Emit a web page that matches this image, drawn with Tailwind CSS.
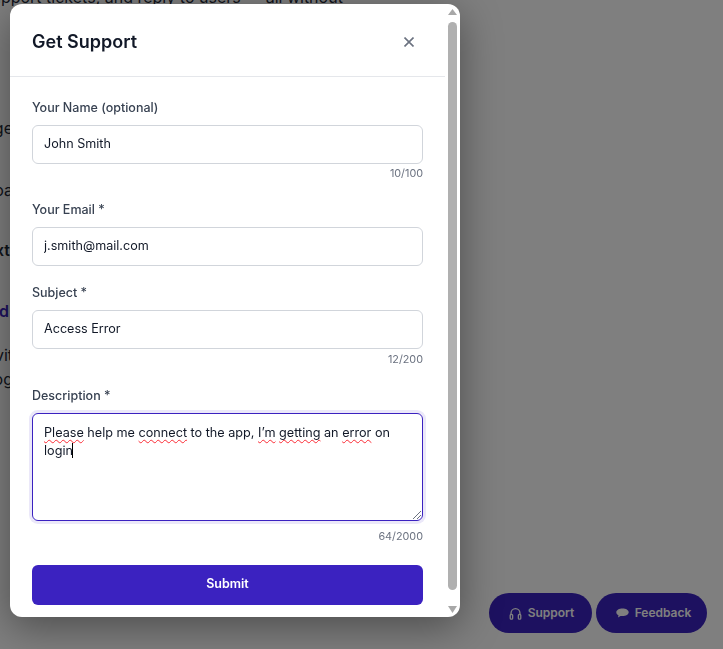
<!DOCTYPE html>
<html lang="en">
<head>
    <meta charset="UTF-8" />
    <meta name="viewport" content="width=device-width, initial-scale=1.0" />
    <title>Get Support</title>
    <script src="https://cdn.jsdelivr.net/npm/@tailwindcss/browser@4"></script>
</head>
<body class="relative h-[649px] w-[723px] overflow-hidden bg-white font-['Inter',sans-serif]">
    <!-- page behind the overlay -->
    <div class="absolute inset-0 text-[16px] leading-[24px] text-[#1f2937]">
        <p class="ml-[-17px] mt-[-15px] whitespace-nowrap">support tickets, and reply to users — all without</p>
        <div class="mt-[107px] flex w-[13px] flex-col items-end whitespace-nowrap">
            <p class="h-[62px]">ge</p>
            <p class="h-[60px]">oa</p>
            <p class="mr-[3px] h-[61px] font-semibold">xt</p>
            <p class="mr-[4px] h-[44px] font-semibold text-[#3b22c0]">d</p>
            <p class="h-[24px]">vit</p>
            <p class="h-[24px]">og</p>
        </div>
    </div>
    <div class="absolute bottom-[16px] right-[16px] flex gap-[4px] text-[12px] font-semibold text-white">
        <button class="flex h-[40px] w-[103px] items-center justify-center gap-[6px] rounded-full bg-[#3b22c0] pl-[2px]">
            <svg class="h-[13px] w-[13px]" viewBox="0 0 16 16" fill="none" stroke="currentColor" stroke-width="1.6"><path d="M2.500 10V7.500a5.500 5.500 0 0 1 11 0V10" /><rect x="1.500" y="9" width="3" height="6" rx="1.200" /><rect x="11.500" y="9" width="3" height="6" rx="1.200" /></svg>
            Support
        </button>
        <button class="flex h-[40px] w-[111px] items-center justify-center gap-[6px] rounded-full bg-[#3b22c0] pl-[4px]">
            <svg class="h-[10px] w-[13px]" viewBox="0 0 13 10" fill="currentColor"><path d="M6.500 0.500c3.400 0 6.200 1.600 6.200 3.800s-2.800 3.800-6.200 3.800c-.7 0-1.400-.1-2-.2L2 9.600l.5-2.300C1.100 6.600.3 5.500.3 4.300.3 2.100 3.100 0.500 6.500 0.500z" /></svg>
            Feedback
        </button>
    </div>
    <div class="absolute inset-0 bg-black/50 backdrop-blur-[0.5px]"></div>

    <!-- modal -->
    <div class="absolute left-[10px] top-[4px] flex h-[613px] w-[450px] overflow-hidden rounded-[12px] bg-white shadow-[0_10px_40px_rgba(0,0,0,0.4)]">
        <div class="w-[435px] shrink-0">
            <div class="flex h-[73px] items-center justify-between border-b border-[#e5e7eb] pl-[22px] pr-[31px] pt-[2px]">
                <h2 class="text-[18px] font-semibold text-[#111827]">Get Support</h2>
                <svg class="mt-[1px] h-[10px] w-[10px] text-[#6b7280]" viewBox="0 0 10 10" fill="none" stroke="currentColor" stroke-width="1.6"><path d="M0.500 0.500l9 9M9.500 0.500l-9 9" /></svg>
            </div>
            <form class="px-[22px] pt-[22px]">
                <label class="block text-[12.500px] font-medium leading-[18px] text-[#374151]">Your Name (optional)</label>
                <input value="John Smith" class="mt-[8px] block h-[39px] w-full rounded-[6px] border border-[#d1d5db] px-[11px] pb-[2px] text-[12.600px] text-[#111827]" />
                <p class="mt-[3px] text-right text-[10.800px] leading-[14px] text-[#6b7280]">10/100</p>

                <label class="mt-[20px] block text-[12.500px] font-medium leading-[18px] text-[#374151]">Your Email *</label>
                <input value="j.smith@mail.com" class="mt-[8px] block h-[39px] w-full rounded-[6px] border border-[#d1d5db] px-[11px] pb-[2px] text-[12.600px] text-[#111827]" />

                <label class="mt-[18px] block text-[12.500px] font-medium leading-[18px] text-[#374151]">Subject *</label>
                <input value="Access Error" class="mt-[8px] block h-[39px] w-full rounded-[6px] border border-[#d1d5db] px-[11px] pb-[2px] text-[12.600px] text-[#111827]" />
                <p class="mt-[4px] text-right text-[10.800px] leading-[14px] text-[#6b7280]">12/200</p>

                <label class="mt-[20px] block text-[12.500px] font-medium leading-[18px] text-[#374151]">Description *</label>
                <div class="relative mt-[8px] h-[108px] w-full rounded-[6px] border border-[#3b22c0] px-[11px] py-[10px] text-[12.650px] leading-[18px] text-[#111827] ring-[3px] ring-[#3b22c0]/10">
                    <span class="underline decoration-red-500 decoration-wavy decoration-1 underline-offset-[2px] [text-decoration-skip-ink:none]">Please</span> help me <span class="underline decoration-red-500 decoration-wavy decoration-1 underline-offset-[2px] [text-decoration-skip-ink:none]">connect</span> to the app, <span class="underline decoration-red-500 decoration-wavy decoration-1 underline-offset-[2px] [text-decoration-skip-ink:none]">I’m</span> <span class="underline decoration-red-500 decoration-wavy decoration-1 underline-offset-[2px] [text-decoration-skip-ink:none]">getting</span> an <span class="underline decoration-red-500 decoration-wavy decoration-1 underline-offset-[2px] [text-decoration-skip-ink:none]">error</span> on login<span class="ml-[-1px] inline-block h-[15px] w-px bg-black align-[-3px]"></span>
                    <svg class="absolute bottom-0 right-0 h-[11px] w-[11px] text-[#6b7280]" viewBox="0 0 11 11" stroke="currentColor" stroke-width="1"><path d="M2 10l8-8M6 10l4-4" /></svg>
                </div>
                <p class="mt-[9px] text-right text-[10.800px] leading-[14px] text-[#6b7280]">64/2000</p>

                <button type="button" class="mt-[21px] h-[40px] w-full rounded-[6px] bg-[#3b22c0] pb-[2px] text-[12.500px] font-semibold text-white">Submit</button>
            </form>
        </div>
        <!-- scrollbar -->
        <div class="flex w-[15px] flex-col items-center">
            <svg class="mt-[5px] h-[6px] w-[9px] text-[#a8a8a8]" viewBox="0 0 9 6" fill="currentColor"><path d="M4.500 0L9 6H0z" /></svg>
            <div class="mt-[7px] h-[568px] w-[9px] rounded-full bg-[#b0b0b0]"></div>
            <svg class="mt-[16px] h-[7px] w-[9px] text-[#a8a8a8]" viewBox="0 0 9 7" fill="currentColor"><path d="M0 0h9L4.500 7z" /></svg>
        </div>
    </div>
</body>
</html>
